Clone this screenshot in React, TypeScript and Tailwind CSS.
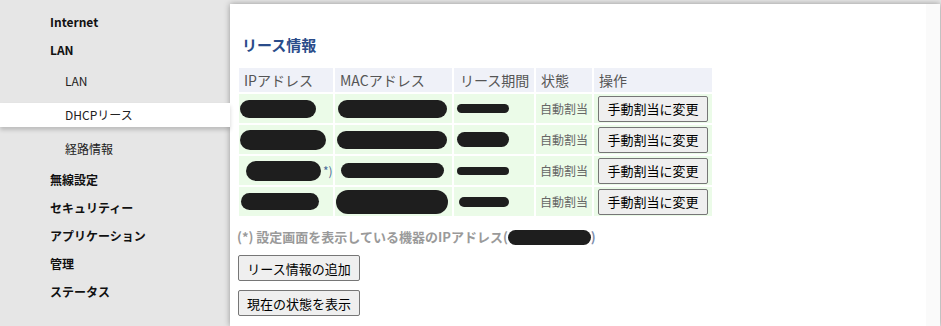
import React from 'react';

type Blob = { w: number; h: number; ml?: number; suffix?: string };
type Lease = { ip: Blob; mac: Blob; term: Blob };

const leases: Lease[] = [
  { ip: { w: 76, h: 18 }, mac: { w: 109, h: 18, ml: 2 }, term: { w: 52, h: 9, ml: 3 } },
  { ip: { w: 86, h: 20 }, mac: { w: 110, h: 18, ml: 1 }, term: { w: 52, h: 15, ml: 3 } },
  { ip: { w: 75, h: 20, ml: 6, suffix: '*)' }, mac: { w: 103, h: 15, ml: 5 }, term: { w: 52, h: 8, ml: 3 } },
  { ip: { w: 78, h: 17, ml: 1 }, mac: { w: 112, h: 24 }, term: { w: 50, h: 10, ml: 5 } },
];

const font = { fontFamily: '"Noto Sans CJK JP", "Noto Sans", sans-serif' };

const Redacted: React.FC<{ blob: Blob }> = ({ blob }) => (
  <span className="flex items-center" style={{ marginLeft: blob.ml ?? 0 }}>
    <span
      className="inline-block rounded-full bg-[#1e1e1e]"
      style={{ width: blob.w, height: blob.h }}
    />
    {blob.suffix && <span className="text-[12px] text-[#4a6a9a] ml-[2px]">{blob.suffix}</span>}
  </span>
);

const NavTop: React.FC<{ label: string }> = ({ label }) => (
  <div className="h-[28px] flex items-center pl-[50px] text-[12px] font-bold text-[#111]">{label}</div>
);

const NavSub: React.FC<{ label: string; active?: boolean }> = ({ label, active }) => (
  <div
    className={`h-[24px] my-[5px] flex items-center pl-[65px] text-[12px] text-[#222] ${
      active ? 'bg-white shadow-[0_3px_4px_rgba(0,0,0,0.18)] relative z-10' : ''
    }`}
  >
    {label}
  </div>
);

const btn =
  'h-[26px] px-[6px] bg-[#efefef] border border-[#767676] rounded-[2px] text-[13px] text-black leading-none';

export default function App() {
  return (
    <div className="w-[941px] h-[326px] bg-[#e6e6e6] flex overflow-hidden" style={font}>
      <aside className="w-[230px] shrink-0 pt-[8px] flex flex-col">
        <NavTop label="Internet" />
        <NavTop label="LAN" />
        <NavSub label="LAN" />
        <NavSub label="DHCPリース" active />
        <NavSub label="経路情報" />
        <NavTop label="無線設定" />
        <NavTop label="セキュリティー" />
        <NavTop label="アプリケーション" />
        <NavTop label="管理" />
        <NavTop label="ステータス" />
      </aside>

      <main className="flex-1 mt-[4px] mr-[1px] bg-white shadow-[0_0_6px_rgba(0,0,0,0.35)] flex">
        <div className="flex-1 pl-[7px]">
          <h2 className="mt-[29px] ml-[5px] h-[24px] flex items-center text-[15px] font-bold text-[#2a4c8a]">
            リース情報
          </h2>

          <table className="mt-[9px] w-[477px] table-fixed border-separate border-spacing-[2px] text-[14px]">
            <thead>
              <tr className="bg-[#eff1f8] text-[#555] h-[24px]">
                <th className="w-[94px] font-normal text-left pl-[5px]">IPアドレス</th>
                <th className="w-[117px] font-normal text-left pl-[5px]">MACアドレス</th>
                <th className="w-[80px] font-normal text-left pl-[6px]">リース期間</th>
                <th className="w-[56px] font-normal text-left pl-[5px]">状態</th>
                <th className="w-[118px] font-normal text-left pl-[5px]">操作</th>
              </tr>
            </thead>
            <tbody>
              {leases.map((l, i) => (
                <tr key={i} className="bg-[#ebfbe8] h-[29px]">
                  <td className="p-0 pl-[1px]">
                    <Redacted blob={l.ip} />
                  </td>
                  <td className="p-0 pl-[1px]">
                    <Redacted blob={l.mac} />
                  </td>
                  <td className="p-0">
                    <Redacted blob={l.term} />
                  </td>
                  <td className="p-0 pl-[4px] text-[12px] text-[#666]">自動割当</td>
                  <td className="p-0 pl-[4px]">
                    <button type="button" className={`${btn} w-[110px]`}>
                      手動割当に変更
                    </button>
                  </td>
                </tr>
              ))}
            </tbody>
          </table>

          <p className="mt-[9px] flex items-center text-[13px] font-bold text-[#9a9a9a] h-[20px]">
            (*) 設定画面を表示している機器のIPアドレス(
            <span className="inline-block w-[83px] h-[15px] rounded-full bg-[#1e1e1e]" />
            <span className="text-[#7f8fae]">)</span>
          </p>

          <div className="mt-[8px] flex flex-col items-start gap-[9px] pl-[1px]">
            <button type="button" className={`${btn} w-[122px]`}>
              リース情報の追加
            </button>
            <button type="button" className={`${btn} w-[122px]`}>
              現在の状態を表示
            </button>
          </div>
        </div>
        <div className="w-[14px] bg-[#fafafa]" />
      </main>
    </div>
  );
}
